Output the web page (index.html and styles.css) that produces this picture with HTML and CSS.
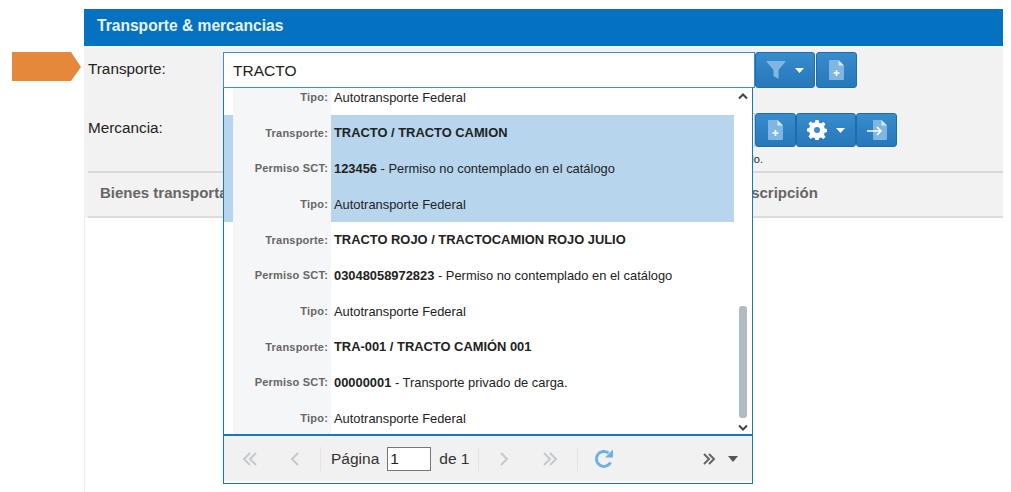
FILE: index.html
```html
<!DOCTYPE html>
<html lang="es">
<head>
<meta charset="utf-8">
<title>Transporte &amp; mercancias</title>
<link rel="stylesheet" href="styles.css">
</head>
<body>
<svg class="pointer" width="70" height="30" viewBox="0 0 70 30"><polygon points="0,0 59,0 69,15 59,29 0,29" fill="#e5883c"/></svg>
<main class="panel">
  <h1 class="panel-title">Transporte &amp; mercancias</h1>
  <div class="panel-body">
    <div class="form-row row-transport">
      <label class="form-label">Transporte:</label>
      <div class="combo">
        <input class="combo-input" type="text" value="TRACTO">
        <div class="dropdown">
          <div class="list">
            <div class="list-items">
              <div class="group first">
                <div class="cell-row filler"></div>
                <div class="cell-row filler"></div>
                <div class="cell-row"><span class="gutter"></span><span class="key">Tipo:</span><span class="val">Autotransporte Federal</span></div>
              </div>
              <div class="group selected">
                <div class="cell-row"><span class="gutter"></span><span class="key">Transporte:</span><span class="val"><b>TRACTO / TRACTO CAMION</b></span></div>
                <div class="cell-row"><span class="gutter"></span><span class="key">Permiso SCT:</span><span class="val"><b>123456</b> - Permiso no contemplado en el catálogo</span></div>
                <div class="cell-row"><span class="gutter"></span><span class="key">Tipo:</span><span class="val">Autotransporte Federal</span></div>
              </div>
              <div class="group">
                <div class="cell-row"><span class="gutter"></span><span class="key">Transporte:</span><span class="val"><b>TRACTO ROJO / TRACTOCAMION ROJO JULIO</b></span></div>
                <div class="cell-row"><span class="gutter"></span><span class="key">Permiso SCT:</span><span class="val"><b>03048058972823</b> - Permiso no contemplado en el catálogo</span></div>
                <div class="cell-row"><span class="gutter"></span><span class="key">Tipo:</span><span class="val">Autotransporte Federal</span></div>
              </div>
              <div class="group">
                <div class="cell-row"><span class="gutter"></span><span class="key">Transporte:</span><span class="val"><b>TRA-001 / TRACTO CAMIÓN 001</b></span></div>
                <div class="cell-row"><span class="gutter"></span><span class="key">Permiso SCT:</span><span class="val"><b>00000001</b> - Transporte privado de carga.</span></div>
                <div class="cell-row"><span class="gutter"></span><span class="key">Tipo:</span><span class="val">Autotransporte Federal</span></div>
              </div>
            </div>
            <div class="scrollbar">
              <svg class="scroll-arrow" width="10" height="7" viewBox="0 0 10 7"><path d="M1 5.500 5 1.500 9 5.500" fill="none" stroke="#444" stroke-width="2"/></svg>
              <div class="scroll-track"><div class="scroll-thumb"></div></div>
              <svg class="scroll-arrow" width="10" height="7" viewBox="0 0 10 7"><path d="M1 1.500 5 5.500 9 1.500" fill="none" stroke="#444" stroke-width="2"/></svg>
            </div>
          </div>
          <div class="pager">
            <svg class="pg first-btn" width="16" height="16" viewBox="0 0 16 16"><path d="M8 2 2 8l6 6M14 2 8 8l6 6" fill="none" stroke="#c6c9cc" stroke-width="2"/></svg>
            <svg class="pg prev-btn" width="10" height="16" viewBox="0 0 10 16"><path d="M8 2 2 8l6 6" fill="none" stroke="#c6c9cc" stroke-width="2"/></svg>
            <span class="pg-sep sep-a"></span>
            <span class="pg-text">Página</span>
            <input class="pg-input" type="text" value="1">
            <span class="pg-text">de 1</span>
            <span class="pg-sep sep-b"></span>
            <svg class="pg next-btn" width="10" height="16" viewBox="0 0 10 16"><path d="M2 2l6 6-6 6" fill="none" stroke="#c6c9cc" stroke-width="2"/></svg>
            <svg class="pg last-btn" width="16" height="16" viewBox="0 0 16 16"><path d="M2 2l6 6-6 6M8 2l6 6-6 6" fill="none" stroke="#c6c9cc" stroke-width="2"/></svg>
            <span class="pg-sep sep-c"></span>
            <svg class="pg refresh-btn" width="20" height="21" viewBox="0 0 20 21"><path d="M16.500 14.500A7.500 7.500 0 1 1 14.500 5" fill="none" stroke="#6db2e2" stroke-width="3"/><polygon points="19,1.500 19,9.500 11,9.500" fill="#6db2e2"/></svg>
            <svg class="pg more-btn" width="14" height="14" viewBox="0 0 14 14"><path d="M2 2l5 5-5 5M7 2l5 5-5 5" fill="none" stroke="#666" stroke-width="2"/></svg>
            <svg class="pg caret-btn" width="10" height="6" viewBox="0 0 10 6"><polygon points="0,0 10,0 5,6" fill="#555"/></svg>
          </div>
        </div>
      </div>
      <div class="btn-group">
        <button class="btn btn-wide" type="button">
          <svg width="20" height="20" viewBox="0 0 20 20"><path d="M0 1h20l-7.500 9v9l-5-3v-6z" fill="#7fb6e2"/></svg>
          <svg class="caret" width="9" height="5" viewBox="0 0 9 5"><polygon points="0,0 9,0 4.500,5" fill="#fff"/></svg>
        </button>
        <button class="btn" type="button">
          <svg width="15" height="20" viewBox="0 0 15 20"><path d="M1 0h8.500L15 5.500V19a1 1 0 0 1-1 1H1a1 1 0 0 1-1-1V1a1 1 0 0 1 1-1z" fill="#7fb6e2"/><path d="M9.500 0 15 5.500H9.500z" fill="#d5e6f5"/><path d="M7.500 10v6M4.500 13h6" stroke="#fff" stroke-width="1.600"/></svg>
        </button>
      </div>
    </div>
    <div class="form-row row-goods">
      <label class="form-label">Mercancia:</label>
      <div class="goods-field">
        <input class="goods-input" type="text">
        <p class="hint">Seleccione un artículo.</p>
      </div>
      <div class="btn-group">
        <button class="btn" type="button">
          <svg width="15" height="20" viewBox="0 0 15 20"><path d="M1 0h8.500L15 5.500V19a1 1 0 0 1-1 1H1a1 1 0 0 1-1-1V1a1 1 0 0 1 1-1z" fill="#7fb6e2"/><path d="M9.500 0 15 5.500H9.500z" fill="#d5e6f5"/><path d="M7.500 10v6M4.500 13h6" stroke="#fff" stroke-width="1.600"/></svg>
        </button>
        <button class="btn btn-wide" type="button">
          <svg width="20" height="20" viewBox="0 0 20 20"><path d="M8.500 0h3l.6 2.700 2 .8 2.300-1.500 2.100 2.100-1.500 2.300.8 2 2.700.6v3l-2.700.6-.8 2 1.500 2.300-2.100 2.100-2.300-1.500-2 .8-.6 2.700h-3l-.6-2.700-2-.8-2.300 1.500L1.500 16.400 3 14.100l-.8-2-2.700-.6v-3l2.700-.6.8-2L1.500 3.600l2.100-2.100 2.300 1.500 2-.8z" fill="#fff"/><circle cx="10" cy="10" r="3" fill="#3b8aca"/></svg>
          <svg class="caret" width="9" height="5" viewBox="0 0 9 5"><polygon points="0,0 9,0 4.500,5" fill="#fff"/></svg>
        </button>
        <button class="btn" type="button">
          <svg width="20" height="20" viewBox="0 0 20 20"><path d="M6 0h8.500L20 5.500V19a1 1 0 0 1-1 1H7a1 1 0 0 1-1-1z" fill="#7fb6e2"/><path d="M14.500 0 20 5.500h-5.500z" fill="#d5e6f5"/><path d="M0 11h14M10 7l4 4-4 4" fill="none" stroke="#fff" stroke-width="1.600"/></svg>
        </button>
      </div>
    </div>
    <div class="table-head">
      <span class="col-goods">Bienes transportados</span>
      <span class="col-desc">Descripción</span>
    </div>
  </div>
  <div class="table-body"></div>
</main>
</body>
</html>
```
FILE: styles.css
```css
* { box-sizing: border-box; }
html, body { margin: 0; height: 100%; overflow: hidden; background: #fff; }
body { font-family: "Liberation Sans", Arial, sans-serif; color: #222; padding: 9px 8px 0 84px; position: relative; }
.pointer { position: absolute; left: 12px; top: 52px; }
.panel { height: 483px; display: flex; flex-direction: column; }
.panel-title { margin: 0; height: 37px; background: #0472c0; color: #e8f2fa; font-size: 15.600px; font-weight: bold; line-height: 33px; padding-left: 13px; }
.panel-body { background: #f2f2f2; padding: 6px 0 0 4px; }
.form-row { display: flex; }
.row-transport { height: 61px; }
.row-goods { height: 58px; }
.form-label { width: 135px; font-size: 15.300px; line-height: 18px; padding-top: 8px; }
.row-goods .form-label { padding-top: 6px; }
.combo { width: 532px; height: 36px; position: relative; }
.combo-input { width: 100%; height: 36px; border: 1px solid #3f8fd0; background: #fff; font: 15.500px "Liberation Sans", Arial, sans-serif; color: #222; padding: 1px 9px 0; outline: none; display: block; }
.dropdown { position: absolute; z-index: 2; left: 0; top: 35px; width: 530px; height: 397px; border: 1px solid #1678c4; border-top-color: #3f8fd0; background: #fff; display: flex; flex-direction: column; }
.list { flex: 1; position: relative; overflow: hidden; border-bottom: 2px solid #1678c4; min-height: 0; }
.list-items { margin-top: -80px; }
.group { height: 107px; display: grid; grid-template-rows: repeat(3, 1fr); }
.filler { visibility: hidden; }
.cell-row { display: flex; align-items: center; font-size: 12.900px; color: #222; }
.gutter { width: 9px; align-self: stretch; }
.key { width: 98px; align-self: stretch; background: #f5f6f8; color: #666; font-size: 11px; font-weight: bold; padding-right: 3px; display: flex; align-items: center; justify-content: flex-end; letter-spacing: .2px; }
.val { flex: 1; align-self: stretch; margin-right: 18px; padding-left: 3px; display: flex; align-items: center; white-space: pre; }
.val b { color: #222; }
.selected .gutter, .selected .val { background: #b7d6ed; }
.scrollbar { position: absolute; right: 0; top: 0; bottom: 0; width: 18px; display: flex; flex-direction: column; align-items: center; padding: 5px 0 3px; }
.scroll-track { flex: 1; width: 8px; margin: 3px 0 6px; display: flex; align-items: flex-end; }
.scroll-thumb { width: 8px; height: 112px; border-radius: 3px; background: #b2bbc1; }
.pager { height: 47px; flex: none; background: #f1f1f1; border-bottom: 2px solid #fff; display: flex; align-items: center; font-size: 15.500px; color: #333; padding-left: 18px; }
.pg { flex: none; }
.prev-btn { margin-left: 32px; }
.pg-sep { width: 1px; height: 24px; background: #e4e4e4; flex: none; }
.sep-a { margin: 0 10px 0 20px; }
.sep-b { margin: 0 20px 0 9px; }
.pg-input { width: 44px; height: 24px; margin: 0 8px; border: 1px solid #777; background: #fff; padding: 0 2px; font: 15.500px "Liberation Sans", Arial, sans-serif; color: #222; }
.last-btn { margin-left: 33px; }
.sep-c { margin: 0 16px 0 19px; }
.more-btn { margin-left: 88px; }
.caret-btn { margin-left: 12px; }
.btn-group { display: flex; gap: 1px; height: 36px; }
.btn { height: 36px; width: 41px; padding: 0; border: 1px solid #1b6dab; border-radius: 3px; background: linear-gradient(#3a8dcc, #2f82c4 45%, #2878ba); display: flex; align-items: center; justify-content: center; gap: 9px; }
.btn-wide { width: 60px; }
.row-goods .btn-group { height: 34px; gap: 0; }
.row-goods .btn { height: 34px; }
.goods-field { width: 532px; }
.goods-input { width: 100%; height: 34px; border: 1px solid #ccc; display: block; background: #fff; }
.hint { margin: 5px -8px 0 0; font-size: 11px; line-height: 14px; color: #222; text-align: right; }
.table-head { height: 47px; border-top: 2px solid #d9d9d9; border-bottom: 2px solid #dcdcdc; display: flex; align-items: center; font-size: 15px; font-weight: bold; color: #666; padding: 0 0 4px 12px; }
.col-goods { width: 632px; }
.col-desc { white-space: nowrap; }
.table-body { flex: 1; background: #fff; border-left: 1px solid #eee; }
```
